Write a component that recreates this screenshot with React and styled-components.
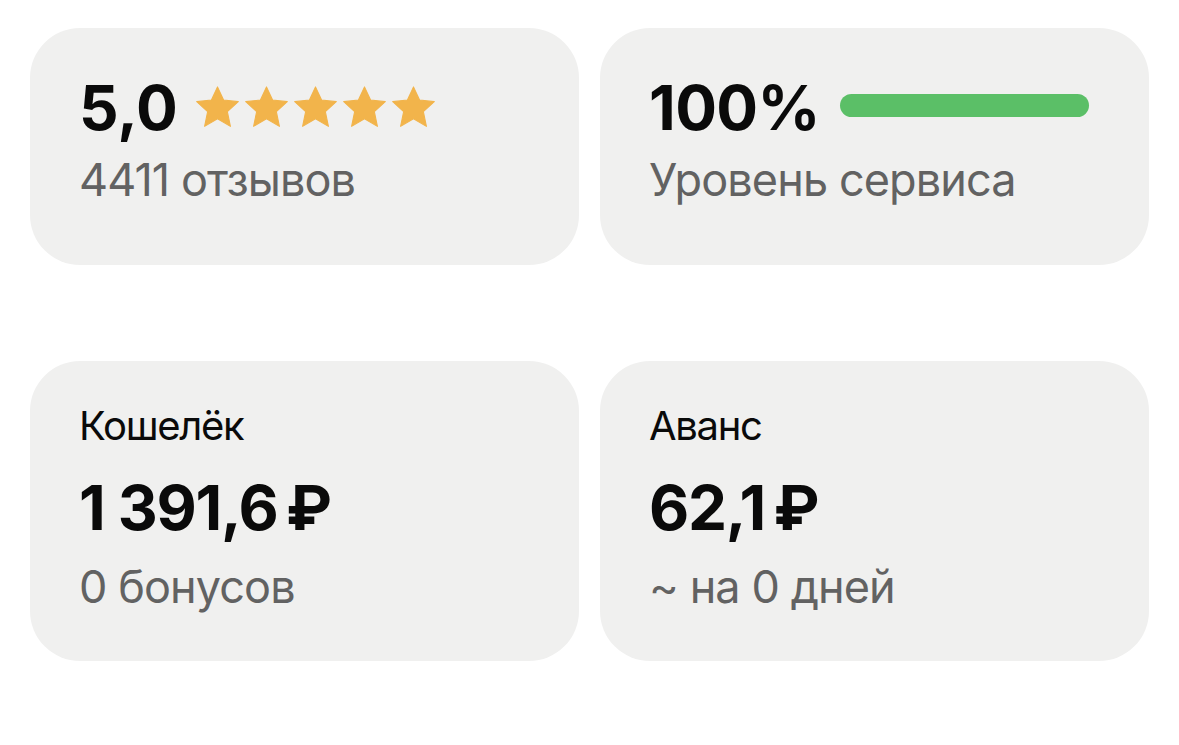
import React from "react";
import styled, { createGlobalStyle } from "styled-components";

const GlobalStyle = createGlobalStyle`
  body {
    margin: 0;
    background: #ffffff;
    font-family: Inter, "Noto Sans", sans-serif;
  }
`;

const Page = styled.div`
  display: grid;
  grid-template-columns: 549px 549px;
  grid-template-rows: 237px 300px;
  column-gap: 21px;
  row-gap: 96px;
  padding: 28px 0 0 30px;
`;

const Card = styled.div`
  background: #f0f0ef;
  border-radius: 50px;
  padding: ${({ tall }) => (tall ? "41px 60px 0 49px" : "42px 60px 0 49px")};
  display: flex;
  flex-direction: column;
  box-sizing: border-box;
`;

const Row = styled.div`
  display: flex;
  align-items: center;
  gap: ${({ gap }) => gap || 20}px;
`;

const Big = styled.div`
  font-size: 62px;
  line-height: 76px;
  font-weight: 700;
  color: #0a0a0a;
  letter-spacing: ${({ spacing }) => spacing || 0}px;
  margin-top: ${({ top }) => top || 0}px;
  white-space: nowrap;
`;

const Sub = styled.div`
  font-size: 45px;
  line-height: 56px;
  color: #626262;
  letter-spacing: -0.9px;
  margin-top: ${({ top }) => top || 6}px;
  white-space: nowrap;
`;

const Label = styled.div`
  font-size: 40px;
  line-height: 48px;
  color: #0a0a0a;
  letter-spacing: -1.3px;
`;

const Stars = styled.div`
  display: flex;
  gap: 6px;
  margin-top: -2px;
`;

const Bar = styled.div`
  flex: 1;
  height: 23px;
  border-radius: 12px;
  background: #5bbf67;
  margin-top: -6px;
`;

const Star = () => (
  <svg width="43" height="42" viewBox="0 0 24 23">
    <path
      d="M12 0.3l3.4 7.3 8.2 0.9-6.1 5.6 1.7 8.2L12 18.1l-7.2 4.2 1.7-8.2L0.4 8.5l8.2-0.9z"
      fill="#f2b44b"
      stroke="#f2b44b"
      strokeWidth="0.6"
      strokeLinejoin="round"
    />
  </svg>
);

export default function App() {
  return (
    <>
      <GlobalStyle />
      <Page>
        <Card>
          <Row gap={18}>
            <Big>5,0</Big>
            <Stars>
              {[0, 1, 2, 3, 4].map((i) => (
                <Star key={i} />
              ))}
            </Stars>
          </Row>
          <Sub>4411 отзывов</Sub>
        </Card>
        <Card>
          <Row gap={20}>
            <Big spacing={-0.6}>100%</Big>
            <Bar />
          </Row>
          <Sub>Уровень сервиса</Sub>
        </Card>
        <Card tall>
          <Label>Кошелёк</Label>
          <Big spacing={-1.3} top={20}>1 391,6{"\u2009"}₽</Big>
          <Sub top={13}>0 бонусов</Sub>
        </Card>
        <Card tall>
          <Label>Аванс</Label>
          <Big spacing={-1.3} top={20}>62,1{"\u2009"}₽</Big>
          <Sub top={13}>~ на 0 дней</Sub>
        </Card>
      </Page>
    </>
  );
}
